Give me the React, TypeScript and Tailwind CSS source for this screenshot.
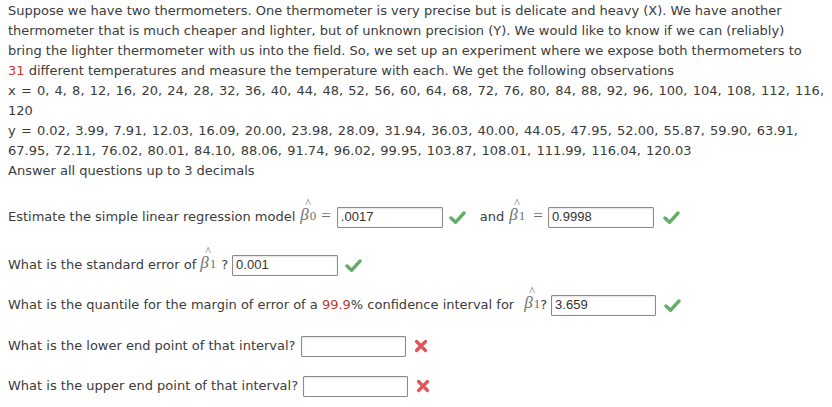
import React from 'react'

const font = "font-['Verdana','DejaVu_Sans',sans-serif]"

function Hat({ sub }: { sub: string }) {
    return (
        <span className="inline-flex flex-col items-start mb-[8px] -translate-y-[3px] font-['Liberation_Serif','DejaVu_Serif',serif] text-[#707070] leading-none">
            <span className="h-[8px] pl-[5px] text-[12px] leading-[8px] overflow-visible">^</span>
            <span className="flex items-end">
                <span className="italic text-[17px] leading-[15px]">β</span>
                <span className="text-[13px] leading-[13px] ml-[1px]">{sub}</span>
            </span>
        </span>
    )
}

function Check() {
    return (
        <svg width="17" height="15" viewBox="0 0 17 15" className="flex-none">
            <path d="M2 8 L6.5 12.3 L15 3" fill="none" stroke="#63ad66" strokeWidth="3.4" strokeLinecap="round" strokeLinejoin="round" />
        </svg>
    )
}

function Cross() {
    return (
        <svg width="14" height="14" viewBox="0 0 14 14" className="flex-none">
            <path d="M2.5 2.5 L11.5 11.5 M11.5 2.5 L2.5 11.5" fill="none" stroke="#e2545a" strokeWidth="3.2" strokeLinecap="round" />
        </svg>
    )
}

function Field({ value, w = 'w-[106px]' }: { value?: string; w?: string }) {
    return (
        <div className={`${w} h-[21px] flex-none border border-[#8a8a8a] rounded-[1px] bg-white shadow-[inset_0_1px_2px_rgba(0,0,0,0.12)] flex items-center pl-[3px] font-['Liberation_Sans',Arial,sans-serif] text-[13px] text-[#333]`}>
            {value}
        </div>
    )
}

const eq = "font-['Liberation_Serif',serif] text-[17px] text-[#707070] mb-[3px]"

export default function App() {
    return (
        <div className={`${font} w-[832px] h-[407px] bg-white text-[#3b3b3b] text-[13px] px-[8px] pt-[1px] overflow-hidden`}>
            <div className="leading-[20px] whitespace-nowrap">
                Suppose we have two thermometers. One thermometer is very precise but is delicate and heavy (X). We have another<br />
                thermometer that is much cheaper and lighter, but of unknown precision (Y). We would like to know if we can (reliably)<br />
                bring the lighter thermometer with us into the field. So, we set up an experiment where we expose both thermometers to<br />
                <span className="text-[#c0392b]">31</span> different temperatures and measure the temperature with each. We get the following observations<br />
                <span className="[word-spacing:1.05px]">x = 0, 4, 8, 12, 16, 20, 24, 28, 32, 36, 40, 44, 48, 52, 56, 60, 64, 68, 72, 76, 80, 84, 88, 92, 96, 100, 104, 108, 112, 116,</span><br />
                120<br />
                <span className="[word-spacing:1.05px]">y = 0.02, 3.99, 7.91, 12.03, 16.09, 20.00, 23.98, 28.09, 31.94, 36.03, 40.00, 44.05, 47.95, 52.00, 55.87, 59.90, 63.91,</span><br />
                <span className="[word-spacing:1.05px]">67.95, 72.11, 76.02, 80.01, 84.10, 88.06, 91.74, 96.02, 99.95, 103.87, 108.01, 111.99, 116.04, 120.03</span><br />
                Answer all questions up to 3 decimals
            </div>

            <div className="mt-[21px] h-[30px] flex items-center whitespace-nowrap">
                <span>Estimate the simple linear regression model</span>
                <span className="ml-[5px] flex"><Hat sub="0" /></span>
                <span className={`ml-[5px] ${eq}`}>=</span>
                <span className="ml-[6px]"><Field value=".0017" /></span>
                <span className="ml-[6px]"><Check /></span>
                <span className="ml-[14px]">and</span>
                <span className="ml-[5px] flex"><Hat sub="1" /></span>
                <span className={`ml-[8px] ${eq}`}>=</span>
                <span className="ml-[5px]"><Field value="0.9998" /></span>
                <span className="ml-[9px]"><Check /></span>
            </div>

            <div className="mt-[18px] h-[30px] flex items-center whitespace-nowrap">
                <span>What is the standard error of</span>
                <span className="ml-[4px] flex"><Hat sub="1" /></span>
                <span className="ml-[5px]">?</span>
                <span className="ml-[4px]"><Field value="0.001" /></span>
                <span className="ml-[7px]"><Check /></span>
            </div>

            <div className="mt-[10px] h-[30px] flex items-center whitespace-nowrap">
                <span>What is the quantile for the margin of error of a <span className="text-[#c0392b]">99.9</span>% confidence interval for</span>
                <span className="ml-[10px] flex"><Hat sub="1" /></span>
                <span>?</span>
                <span className="ml-[4px]"><Field value="3.659" w="w-[105px]" /></span>
                <span className="ml-[8px]"><Check /></span>
            </div>

            <div className="mt-[11px] h-[30px] flex items-center whitespace-nowrap">
                <span>What is the lower end point of that interval?</span>
                <span className="ml-[5px]"><Field w="w-[105px]" /></span>
                <span className="ml-[8px]"><Cross /></span>
            </div>

            <div className="mt-[10px] h-[30px] flex items-center whitespace-nowrap">
                <span>What is the upper end point of that interval?</span>
                <span className="ml-[5px]"><Field w="w-[105px]" /></span>
                <span className="ml-[8px]"><Cross /></span>
            </div>
        </div>
    )
}
